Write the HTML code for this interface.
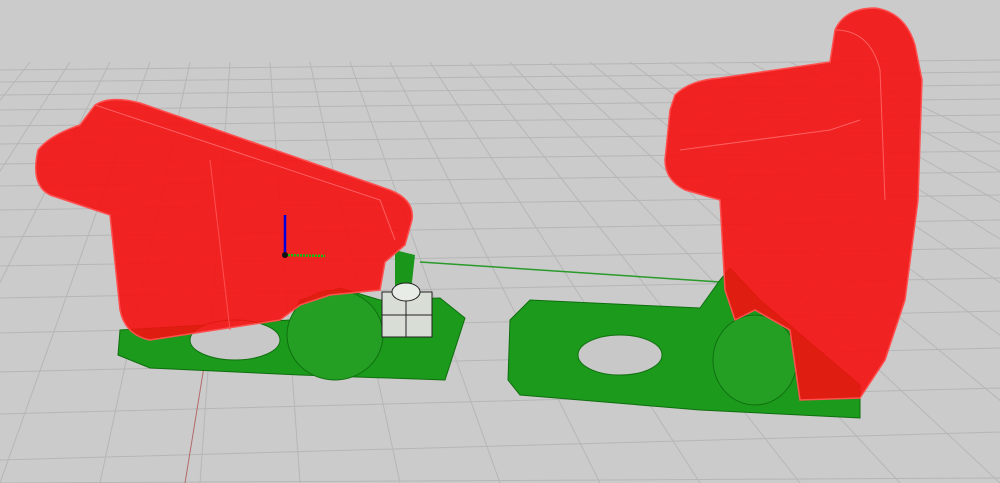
<!DOCTYPE html>
<html><head><style>html,body{margin:0;padding:0;background:#cacaca;overflow:hidden}svg{display:block}</style></head>
<body>
<svg width="1000" height="483" viewBox="0 0 1000 483" xmlns="http://www.w3.org/2000/svg">
<rect width="1000" height="483" fill="#cbcbcb"/>
<g stroke="#b6b6b6" stroke-width="1" fill="none">
<path d="M0 70 L1000 60"/>
<path d="M0 82 L1000 72"/><path d="M0 95 L1000 85"/><path d="M0 110 L1000 99"/>
<path d="M0 126 L1000 115"/><path d="M0 144 L1000 132"/><path d="M0 164 L1000 151"/>
<path d="M0 186 L1000 172"/><path d="M0 210 L1000 195"/><path d="M0 237 L1000 220"/>
<path d="M0 266 L1000 248"/><path d="M0 298 L1000 278"/><path d="M0 333 L1000 311"/>
<path d="M0 372 L1000 348"/><path d="M0 414 L1000 388"/><path d="M0 460 L1000 432"/>
<path d="M0 483 L1000 478"/>
</g>
<g stroke="#b6b6b6" stroke-width="1">
<path d="M70 62 L-200 483"/><path d="M110 62 L-100 483"/><path d="M150 62 L0 483"/>
<path d="M190 62 L100 483"/><path d="M230 62 L200 483"/><path d="M270 62 L300 483"/>
<path d="M310 62 L400 483"/><path d="M350 62 L500 483"/><path d="M390 62 L600 483"/>
<path d="M430 62 L700 483"/><path d="M470 62 L800 483"/><path d="M510 62 L900 483"/>
<path d="M550 62 L1000 483"/><path d="M590 62 L1100 483"/><path d="M630 62 L1200 483"/>
<path d="M670 62 L1300 483"/><path d="M710 62 L1400 483"/><path d="M750 62 L1500 483"/>
<path d="M790 62 L1600 483"/><path d="M830 62 L1700 483"/><path d="M30 62 L-300 483"/>
</g>
<path d="M210 330 L185 483" stroke="#b46a6a" stroke-width="1"/>
<path d="M420 262 L720 282" stroke="#2a9a2a" stroke-width="1.5"/>
<path d="M120 330 L290 320 L300 300 L340 288 L380 300 L440 298 L465 318 L445 380 L300 375 L150 368 L118 355 Z" fill="#1c9a1c" stroke="#0e6e0e"/>
<path d="M395 250 L415 255 L410 300 L395 300 Z" fill="#1a961a"/>
<ellipse cx="335" cy="335" rx="48" ry="45" fill="#249f24" stroke="#0f700f"/>
<ellipse cx="235" cy="340" rx="45" ry="20" fill="#c8c8c8" stroke="#0f700f"/>
<rect x="382" y="292" width="50" height="45" fill="#d8ddd5" stroke="#222"/>
<path d="M382 315 L432 315 M406 300 L406 337" stroke="#222"/>
<ellipse cx="406" cy="292" rx="14" ry="9" fill="#e8ece6" stroke="#222"/>
<path d="M38 150 Q50 135 80 125 L95 105 Q110 95 140 103 L390 190 Q415 200 412 220 L405 245 L385 262 L380 290 L330 295 L300 305 L280 320 L150 340 Q125 335 120 310 L110 215 Q80 205 50 195 Q30 185 38 150 Z" fill="#f51010" fill-opacity="0.9" stroke="#ff5050" stroke-width="1.5"/>
<path d="M95 105 L380 200 L395 240" stroke="#ff6060" fill="none"/>
<path d="M210 160 L230 330" stroke="#ff5050" fill="none"/>
<path d="M285 215 L285 255" stroke="#0000dd" stroke-width="2.5"/>
<path d="M285 255 L325 256" stroke="#10c010" stroke-width="2.5" stroke-dasharray="2 1"/>
<circle cx="285" cy="255" r="3" fill="#111"/>
<path d="M510 320 L530 300 L700 308 L720 280 L730 268 L760 300 L860 385 L860 418 L700 410 L520 395 L508 380 Z" fill="#1c9a1c" stroke="#0e6e0e"/>
<ellipse cx="620" cy="355" rx="42" ry="20" fill="#c8c8c8" stroke="#0f700f"/>
<ellipse cx="755" cy="360" rx="42" ry="45" fill="#249f24" stroke="#0f700f"/>
<path d="M675 95 Q690 80 720 78 L830 62 L835 30 Q845 8 875 8 Q905 12 915 45 L922 80 L918 200 L905 300 L885 360 L860 398 L800 400 L790 330 L755 310 L735 320 L725 290 L720 200 L685 190 Q665 180 665 160 L670 110 Z" fill="#f51010" fill-opacity="0.9" stroke="#ff5050" stroke-width="1.5"/>
<path d="M835 30 Q870 30 880 70 L885 200" stroke="#ff6060" fill="none"/>
<path d="M680 150 L830 130 L860 120" stroke="#ff6060" fill="none"/>
</svg>
</body></html>
